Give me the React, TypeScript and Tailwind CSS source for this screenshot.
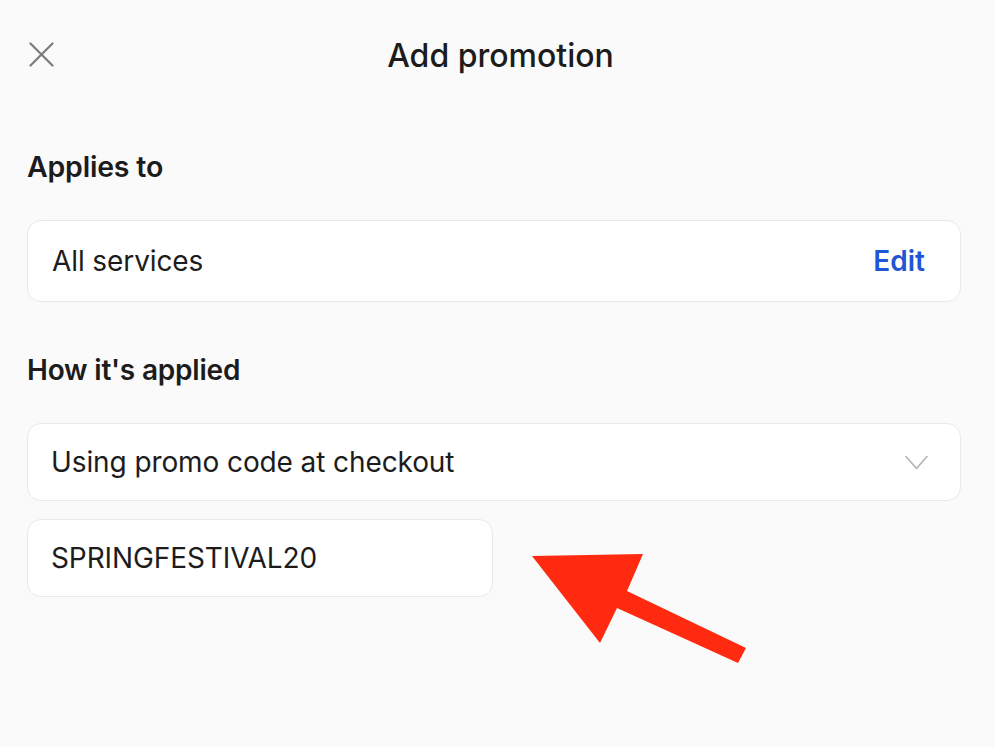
export default function App() {
  return (
    <div className="relative h-[747px] w-[994px] overflow-hidden bg-[#fafafa] text-[#1c1c1c]" style={{ fontFamily: 'Inter, "Noto Sans", sans-serif' }}>
      <header className="relative flex h-[112px] items-center justify-center">
        <button className="absolute left-[29px] top-[42px]" aria-label="Close">
          <svg width="25" height="25" viewBox="0 0 25 25" fill="none" stroke="#7b7b7b" strokeWidth="2.2" strokeLinecap="round">
            <line x1="1.5" y1="1.5" x2="23.5" y2="23.5" />
            <line x1="23.5" y1="1.5" x2="1.5" y2="23.5" />
          </svg>
        </button>
        <h1 className="ml-[7px] text-[32px] font-medium tracking-[0px]">Add promotion</h1>
      </header>

      <section className="px-[27px] pr-[33px]">
        <h2 className="mt-[38px] text-[28.5px] font-semibold leading-[34px] tracking-[-0.2px]">Applies to</h2>
        <div className="mt-[36px] flex h-[82px] items-center justify-between rounded-[14px] border border-[#e9e9e9] bg-white pl-[24px] pr-[35px]">
          <span className="text-[28px] tracking-[-0.1px]">All services</span>
          <button className="text-[28px] font-semibold text-[#1f56d6]">Edit</button>
        </div>

        <h2 className="mt-[51px] text-[28px] font-semibold leading-[34px] tracking-[-0.2px]">How it's applied</h2>
        <div className="mt-[36px] flex h-[78px] items-center justify-between rounded-[14px] border border-[#e9e9e9] bg-white pl-[23px] pr-[32px]">
          <span className="text-[28px] tracking-[-0.1px]">Using promo code at checkout</span>
          <svg width="23" height="15" viewBox="0 0 23 15" fill="none" stroke="#b3b3b3" strokeWidth="1.6" strokeLinecap="round" strokeLinejoin="round">
            <polyline points="1,1.5 11.5,13.5 22,1.5" />
          </svg>
        </div>
        <div className="mt-[18px] flex h-[78px] w-[466px] items-center rounded-[14px] border border-[#e9e9e9] bg-white pl-[23px]">
          <span className="text-[28px] tracking-[-0.1px]">SPRINGFESTIVAL20</span>
        </div>
      </section>

      <svg className="absolute left-0 top-0" width="994" height="747" viewBox="0 0 994 747" aria-hidden="true">
        <polygon
          points="532,556 643,554 627,591 746,648 738,663 617,608 600,643"
          fill="#ff2a0f"
        />
      </svg>
    </div>
  );
}
